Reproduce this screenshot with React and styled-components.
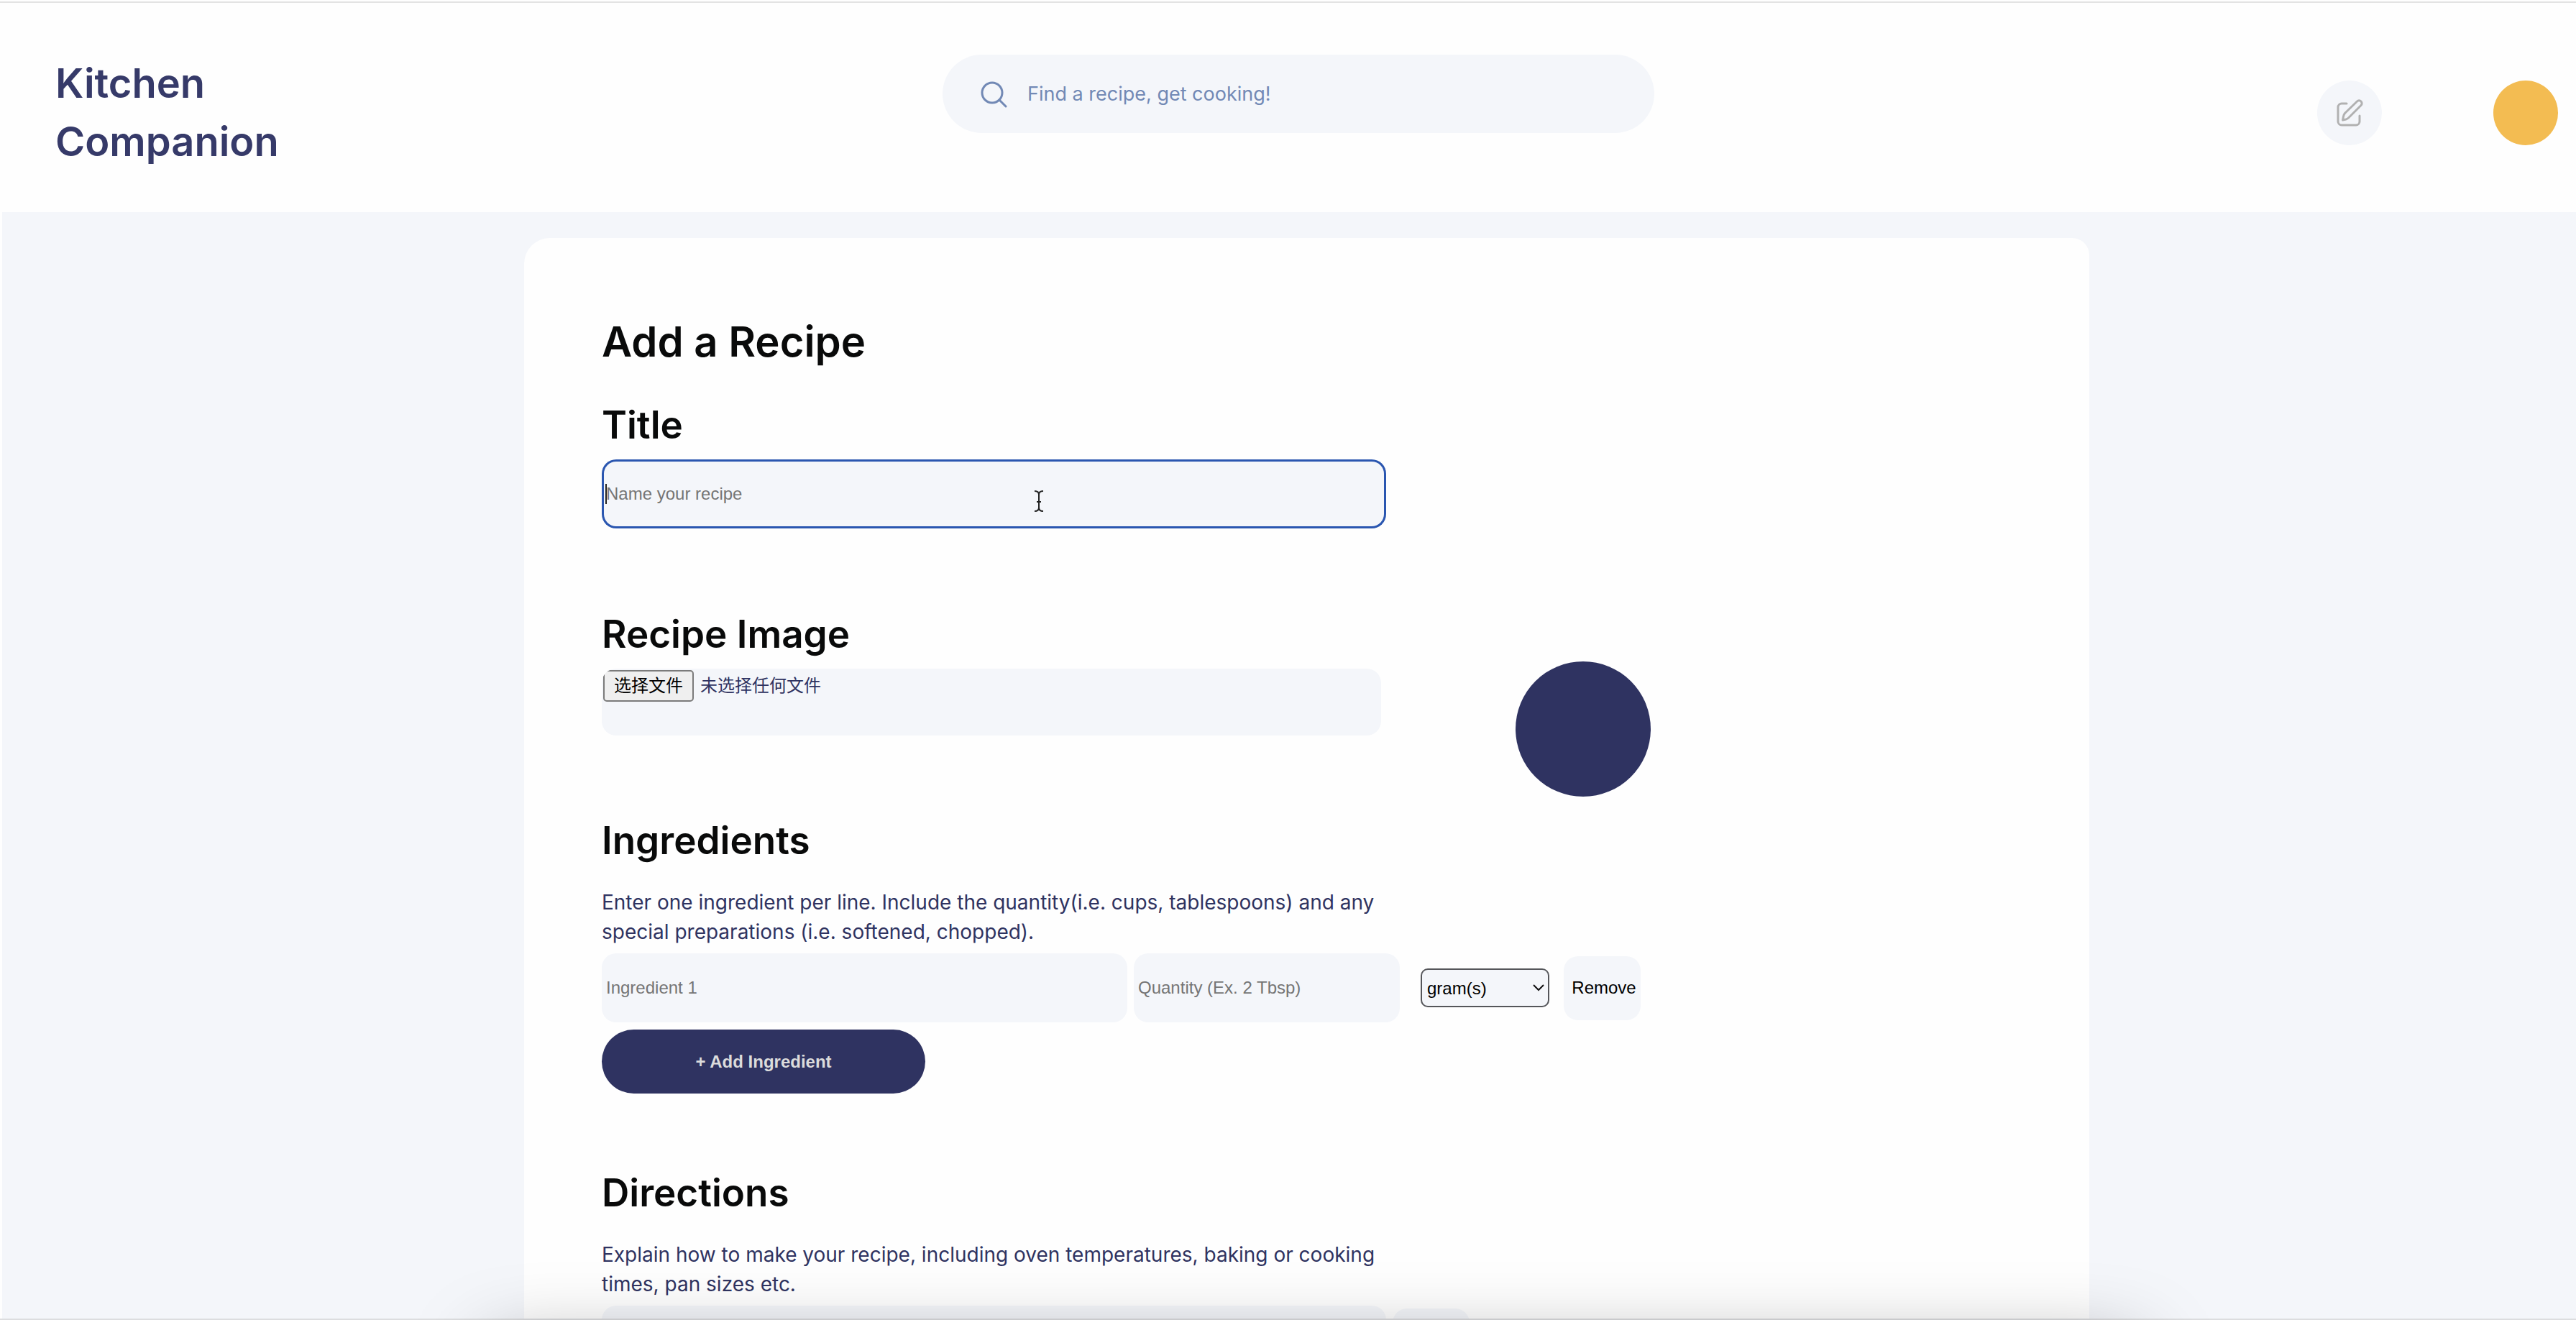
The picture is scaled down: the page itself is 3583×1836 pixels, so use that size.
import React, { useState } from "react";
import styled, { createGlobalStyle } from "styled-components";

const colors = {
  navy: "#2f3361",
  surface: "#f4f6fa",
  white: "#fefefe",
  search: "#7289b5",
  amber: "#f3bc52",
  focus: "#2a56b0",
};

const GlobalStyle = createGlobalStyle`
  *, *::before, *::after { box-sizing: border-box; }
  body {
    margin: 0;
    color: #090a0a;
    background: ${colors.surface};
    font-family: Inter, "Noto Sans CJK SC", sans-serif;
  }
  h1, h2, p { margin: 0; }
  button, input, select { font-family: "Liberation Sans", Arial, sans-serif; }
`;

const Page = styled.div`
  display: flex;
  flex-direction: column;
  height: 100vh;
  overflow: hidden;
  border-top: 2px solid ${colors.white};
  border-bottom: 2px solid #dcdddf;
`;

const Header = styled.header`
  flex: none;
  display: grid;
  grid-template-columns: 1234fr 990fr 1257fr;
  padding: 72px 25px 57px 77px;
  border-top: 2px solid #e3e3e3;
  background: ${colors.white};
`;

const Logo = styled.a`
  width: 330px;
  color: #363a69;
  font-size: 56px;
  font-weight: 600;
  line-height: 81px;
  text-decoration: none;
`;

const SearchBox = styled.label`
  align-self: start;
  display: flex;
  align-items: center;
  gap: 28px;
  height: 109px;
  padding: 0 52px;
  border-radius: 55px;
  color: ${colors.search};
  background: ${colors.surface};
`;

const SearchInput = styled.input`
  flex: 1;
  min-width: 0;
  padding: 0;
  border: 0;
  outline: 0;
  background: transparent;
  color: inherit;
  font-family: Inter, sans-serif;
  font-size: 27px;
  &::placeholder { color: inherit; opacity: 1; }
`;

const Actions = styled.div`
  display: flex;
  align-items: center;
  justify-content: flex-end;
  gap: 155px;
`;

const RoundButton = styled.button`
  display: grid;
  place-items: center;
  width: 90px;
  height: 90px;
  padding: 0;
  border: 0;
  border-radius: 50%;
  color: #b1b1b1;
  background: ${(p) => p.$fill};
`;

const Main = styled.main`
  flex: 1;
  min-height: 0;
  overflow-y: auto;
  scrollbar-width: none;
  display: grid;
  grid-template-columns: 726fr 2177fr 677fr;
  padding-top: 36px;
  border-left: 3px solid ${colors.white};
`;

const Card = styled.form`
  grid-column: 2;
  padding: 104px 108px;
  border-radius: 36px 24px 0 0;
  background: ${colors.white};
`;

const PageTitle = styled.h1`
  margin-bottom: 40px;
  font-size: 58px;
  font-weight: 600;
  line-height: 80px;
`;

const Section = styled.section`
  margin-bottom: ${(p) => p.$space}px;
`;

const ImageSection = styled(Section)`
  display: flex;
  gap: 187px;
`;

const Heading = styled.h2`
  margin-bottom: ${(p) => (p.$wide ? 30 : 12)}px;
  font-size: 53px;
  font-weight: 600;
  line-height: 72px;
`;

const Hint = styled.p`
  max-width: 1100px;
  margin-bottom: 9px;
  color: ${colors.navy};
  font-size: 28px;
  line-height: 41px;
`;

const Field = styled.input`
  width: ${(p) => p.$width}px;
  height: 96px;
  padding: 0 6px;
  border: 0;
  border-radius: 20px;
  outline: 0;
  background: ${colors.surface};
  font-size: 24px;
  &::placeholder { color: #757575; opacity: 1; }
`;

const TitleField = styled(Field)`
  box-shadow: inset 0 0 0 3px ${colors.focus};
  caret-color: transparent;
`;

const FieldWrap = styled.div`
  position: relative;
  width: fit-content;
  display: flex;
`;

const Caret = styled.span`
  position: absolute;
  left: 5px;
  top: 34px;
  width: 2px;
  height: 28px;
  background: #222;
  pointer-events: none;
`;

const TextCursor = styled.svg`
  position: absolute;
  left: 601px;
  top: 43px;
  pointer-events: none;
`;

const FilePicker = styled.div`
  display: flex;
  align-items: flex-start;
  gap: 9px;
  width: 1084px;
  height: 93px;
  padding: 2px;
  overflow: hidden;
  border-radius: 20px;
  background: ${colors.surface};
  color: ${colors.navy};
  font: 24px/44px "Liberation Sans", "Noto Sans CJK SC", sans-serif;
`;

const FileInput = styled.input`
  position: absolute;
  width: 1px;
  height: 1px;
  opacity: 0;
`;

const FileButton = styled.label`
  padding: 0 13px;
  border: 2px solid #7b7b7b;
  border-radius: 5px;
  background: #efefef;
  color: #000;
  line-height: 40px;
`;

const Preview = styled.div`
  flex: none;
  width: 188px;
  height: 188px;
  margin-top: 74px;
  border-radius: 50%;
  background: ${colors.navy};
`;

const Row = styled.div`
  display: flex;
  align-items: center;
  gap: 9px;
`;

const SelectWrap = styled.div`
  display: grid;
  align-items: center;
  margin: 0 11px 0 20px;
  > * { grid-area: 1 / 1; }
  svg { justify-self: end; margin-right: 7px; pointer-events: none; }
`;

const UnitSelect = styled.select`
  appearance: none;
  width: 179px;
  height: 54px;
  padding: 0 7px;
  border: 2px solid #55565a;
  border-radius: 10px;
  background: ${colors.surface};
  color: #000;
  font-size: 24px;
`;

const RemoveButton = styled.button`
  width: 107px;
  height: 89px;
  padding: 0 0 0 5px;
  border: 0;
  border-radius: 20px;
  background: ${colors.surface};
  color: #000;
  font-size: 24px;
  white-space: nowrap;
`;

const AddButton = styled.button`
  display: block;
  width: 450px;
  height: 89px;
  margin-top: 10px;
  border: 0;
  border-radius: 45px;
  background: ${colors.navy};
  color: #dcdcdc;
  font-size: 24px;
  font-weight: 700;
`;

const SheetShadow = styled.div`
  position: fixed;
  top: calc(100% + 40px);
  left: 19%;
  right: 17%;
  height: 200px;
  box-shadow: 0 0 110px rgba(0, 0, 0, 0.38);
  pointer-events: none;
`;

export default function App() {
  const [fileName, setFileName] = useState("未选择任何文件");
  return (
    <>
      <GlobalStyle />
      <Page>
        <Header>
          <Logo href="#home">Kitchen Companion</Logo>
          <SearchBox>
            <svg width="38" height="38" viewBox="0 0 38 38" fill="none" stroke="currentColor" strokeWidth="3" aria-hidden="true">
              <circle cx="17" cy="17" r="14" />
              <path d="m27 27 9 9" strokeLinecap="round" />
            </svg>
            <SearchInput aria-label="Search" placeholder="Find a recipe, get cooking!" />
          </SearchBox>
          <Actions>
            <RoundButton type="button" $fill={colors.surface} aria-label="New recipe">
              <svg width="38" height="38" viewBox="0 0 38 38" fill="none" stroke="currentColor" strokeWidth="3" strokeLinecap="round" strokeLinejoin="round" aria-hidden="true">
                <path d="M15 6H8a5 5 0 0 0-5 5v20a5 5 0 0 0 5 5h20a5 5 0 0 0 5-5v-8" />
                <path d="m12.5 19.500 17-16.500a3.800 3.800 0 0 1 5.500 5.500L18 25.500q-2 2-4 2.500l-4.500 1 1-5q.5-2.500 2-4.500Z" />
              </svg>
            </RoundButton>
            <RoundButton type="button" $fill={colors.amber} aria-label="Account" />
          </Actions>
        </Header>
        <Main>
          <Card onSubmit={(e) => e.preventDefault()}>
            <PageTitle>Add a Recipe</PageTitle>
            <Section $space={111}>
              <Heading><label htmlFor="title">Title</label></Heading>
              <FieldWrap>
                <TitleField id="title" $width={1091} placeholder="Name your recipe" autoFocus />
                <Caret />
                <TextCursor width="14" height="30" viewBox="0 0 14 30" fill="none" stroke="#222" strokeWidth="2" aria-hidden="true">
                  <path d="M1 1q6 0 6 5v18q0 5-6 5M13 1q-6 0-6 5m0 18q0 5 6 5M4 16h6" />
                </TextCursor>
              </FieldWrap>
            </Section>
            <ImageSection $space={25}>
              <div>
                <Heading>Recipe Image</Heading>
                <FilePicker>
                  <FileInput id="image" type="file" onChange={(e) => setFileName(e.target.files[0]?.name ?? "未选择任何文件")} />
                  <FileButton htmlFor="image">选择文件</FileButton>
                  <span>{fileName}</span>
                </FilePicker>
              </div>
              <Preview />
            </ImageSection>
            <Section $space={102}>
              <Heading $wide>Ingredients</Heading>
              <Hint>Enter one ingredient per line. Include the quantity(i.e. cups, tablespoons) and any special preparations (i.e. softened, chopped).</Hint>
              <Row>
                <Field $width={731} placeholder="Ingredient 1" aria-label="Ingredient 1" />
                <Field $width={370} placeholder="Quantity (Ex. 2 Tbsp)" aria-label="Quantity" />
                <SelectWrap>
                  <UnitSelect aria-label="Unit" defaultValue="g">
                    <option value="g">gram(s)</option>
                  </UnitSelect>
                  <svg width="16" height="10" viewBox="0 0 16 10" fill="none" stroke="#111" strokeWidth="2" aria-hidden="true">
                    <path d="m1 1 7 7 7-7" />
                  </svg>
                </SelectWrap>
                <RemoveButton type="button">Remove</RemoveButton>
              </Row>
              <AddButton type="button">+ Add Ingredient</AddButton>
            </Section>
            <Section $space={0}>
              <Heading $wide>Directions</Heading>
              <Hint>Explain how to make your recipe, including oven temperatures, baking or cooking times, pan sizes etc.</Hint>
              <Row>
                <Field $width={1091} aria-label="Directions" />
                <RemoveButton type="button" aria-label="Remove direction" />
              </Row>
            </Section>
          </Card>
        </Main>
      </Page>
      <SheetShadow />
    </>
  );
}
